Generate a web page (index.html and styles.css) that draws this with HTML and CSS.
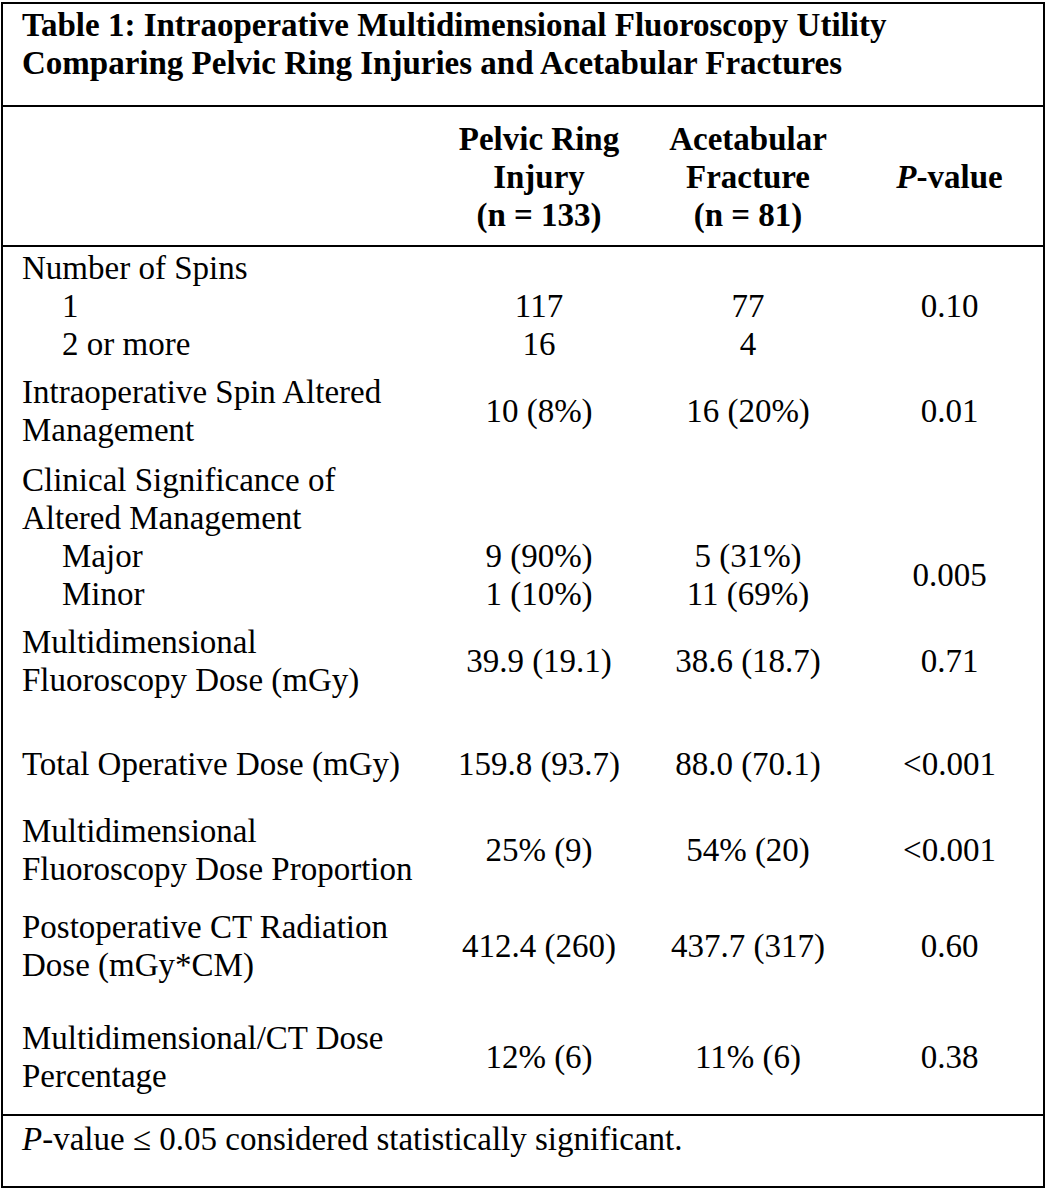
FILE: index.html
```html
<!DOCTYPE html>
<html lang="en">
<head>
<meta charset="utf-8">
<title>Table 1</title>
<link rel="stylesheet" href="styles.css">
</head>
<body>
<div class="frame">
<table class="data">
  <colgroup>
    <col class="c-label">
    <col class="c-pelvic">
    <col class="c-acet">
    <col class="c-p">
  </colgroup>
  <thead>
    <tr class="title-row">
      <th colspan="4" class="title">Table 1: Intraoperative Multidimensional Fluoroscopy Utility<br>Comparing Pelvic Ring Injuries and Acetabular Fractures</th>
    </tr>
    <tr class="head-row">
      <th></th>
      <th class="hv">Pelvic Ring<br>Injury<br>(n = 133)</th>
      <th class="hv">Acetabular<br>Fracture<br>(n = 81)</th>
      <th class="hv"><i>P</i>-value</th>
    </tr>
  </thead>
  <tbody>
    <tr class="r1">
      <td class="lab">Number of Spins<br><span class="ind">1</span><br><span class="ind">2 or more</span></td>
      <td class="val"><br>117<br>16</td>
      <td class="val"><br>77<br>4</td>
      <td class="val"><br>0.10</td>
    </tr>
    <tr class="r2">
      <td class="lab">Intraoperative Spin Altered<br>Management</td>
      <td class="val">10 (8%)</td>
      <td class="val">16 (20%)</td>
      <td class="val">0.01</td>
    </tr>
    <tr class="r3">
      <td class="lab">Clinical Significance of<br>Altered Management<br><span class="ind">Major</span><br><span class="ind">Minor</span></td>
      <td class="val"><br><br>9 (90%)<br>1 (10%)</td>
      <td class="val"><br><br>5 (31%)<br>11 (69%)</td>
      <td class="val pv">0.005</td>
    </tr>
    <tr class="r4">
      <td class="lab">Multidimensional<br>Fluoroscopy Dose (mGy)</td>
      <td class="val">39.9 (19.1)</td>
      <td class="val">38.6 (18.7)</td>
      <td class="val">0.71</td>
    </tr>
    <tr class="r5">
      <td class="lab">Total Operative Dose (mGy)</td>
      <td class="val">159.8 (93.7)</td>
      <td class="val">88.0 (70.1)</td>
      <td class="val">&lt;0.001</td>
    </tr>
    <tr class="r6">
      <td class="lab">Multidimensional<br>Fluoroscopy Dose Proportion</td>
      <td class="val">25% (9)</td>
      <td class="val">54% (20)</td>
      <td class="val">&lt;0.001</td>
    </tr>
    <tr class="r7">
      <td class="lab">Postoperative CT Radiation<br>Dose (mGy*CM)</td>
      <td class="val">412.4 (260)</td>
      <td class="val">437.7 (317)</td>
      <td class="val">0.60</td>
    </tr>
    <tr class="r8">
      <td class="lab">Multidimensional/CT Dose<br>Percentage</td>
      <td class="val">12% (6)</td>
      <td class="val">11% (6)</td>
      <td class="val">0.38</td>
    </tr>
  </tbody>
  <tfoot>
    <tr class="foot-row">
      <td colspan="4" class="foot"><i>P</i>-value ≤ 0.05 considered statistically significant.</td>
    </tr>
  </tfoot>
</table>
</div>
</body>
</html>
```
FILE: styles.css
```css
html, body {
  margin: 0;
  padding: 0;
  background: #ffffff;
}

body {
  font-family: "Liberation Serif", "Times New Roman", serif;
  font-size: 33px;
  line-height: 38px;
  color: #000000;
}

.frame {
  margin: 2px 0 0 1px;
  width: 1040px;
  border: 2px solid #000000;
}

.data {
  width: 1040px;
  table-layout: fixed;
  border-collapse: collapse;
  border-spacing: 0;
}

.c-label { width: 435px; }
.c-pelvic { width: 202px; }
.c-acet { width: 216px; }
.c-p { width: 187px; }

.data th,
.data td {
  padding: 0;
  font-weight: normal;
  text-align: left;
  vertical-align: middle;
}

.title {
  font-weight: bold !important;
  padding: 2px 19px 23px 19px !important;
  border-bottom: 2px solid #000000;
}

.head-row th {
  padding-top: 13px;
  padding-bottom: 11px;
  border-bottom: 2px solid #000000;
}

.hv {
  font-weight: bold !important;
  text-align: center !important;
}

.lab {
  padding-left: 19px !important;
}

.ind {
  padding-left: 40px;
}

.val {
  text-align: center !important;
}

.r1 td { padding-top: 2px; vertical-align: top; }
.r2 td { padding-top: 10px; }
.r3 td { padding-top: 12px; vertical-align: top; }
.r3 .pv { vertical-align: bottom; padding-bottom: 19px; }
.r4 td { padding-top: 10px; }
.r5 td { padding-top: 46px; }
.r6 td { padding-top: 29px; }
.r7 td { padding-top: 20px; }
.r8 td { padding-top: 35px; padding-bottom: 19px; }

.foot {
  padding: 4px 19px 28px 19px !important;
  border-top: 2px solid #000000;
}
```
